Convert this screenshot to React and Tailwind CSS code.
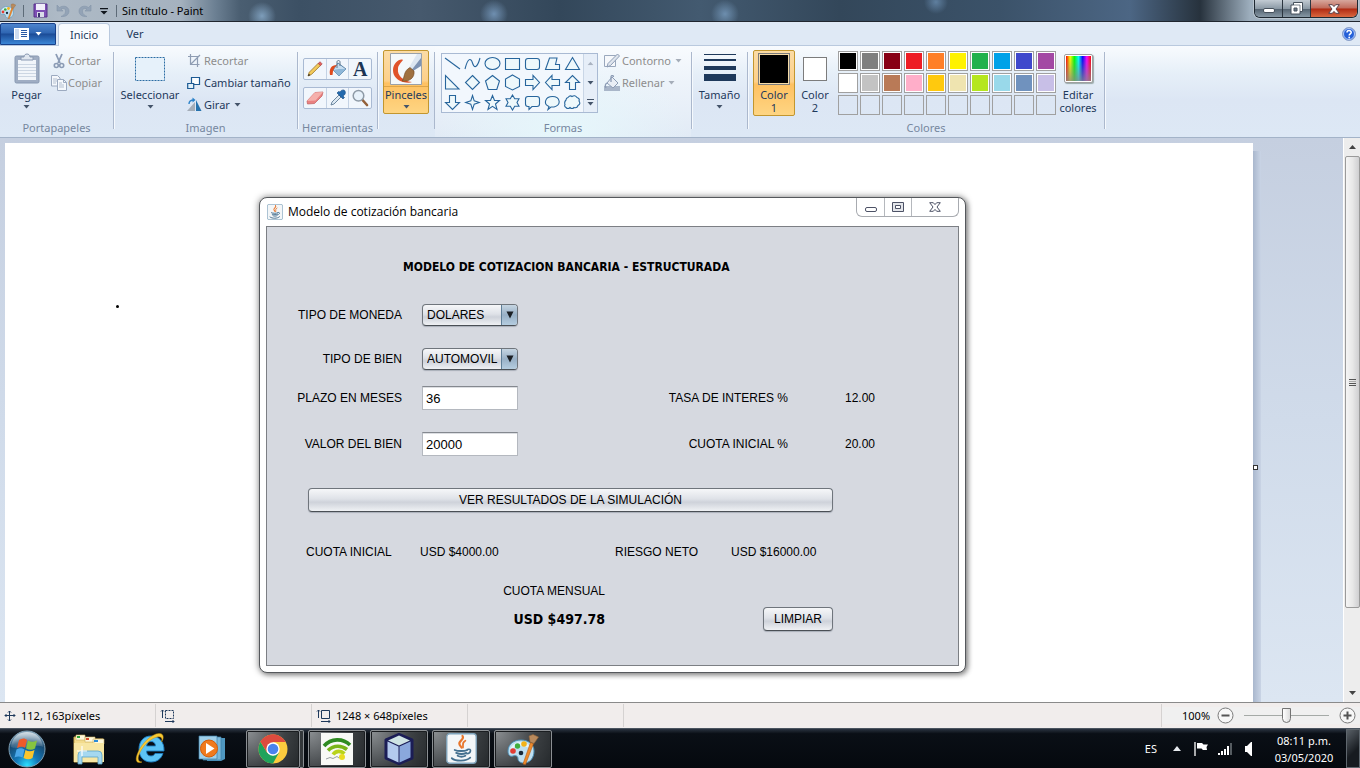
import React from "react";

const Caret = ({ className = "text-[#44546a]" }) => (
  <svg width="7" height="4" viewBox="0 0 7 4" className={className} aria-hidden="true">
    <path d="M0.5 0h6L3.5 3.6z" fill="currentColor" />
  </svg>
);

const PaletteIcon = ({ size }) => (
  <svg width={size} height={size} viewBox="0 0 32 32" aria-hidden="true">
    <path d="M14 7C6 7 1 12 1 18c0 4 2 6 5 5 3-1 5 0 5 3 0 2 2 4 6 4 6 0 10-5 10-12C27 11 21 7 14 7z" fill="#bfe0f2" stroke="#4d8fb5" strokeWidth="1" />
    <path d="M3 17c1-5 6-8 11-8s9 3 10 7c-6-4-15-4-21 1z" fill="#e6f5fc" />
    <circle cx="6" cy="18" r="2.800" fill="#e23c33" />
    <circle cx="10.500" cy="13" r="2.700" fill="#3fae3f" />
    <circle cx="17" cy="11" r="2.800" fill="#f2b31b" />
    <circle cx="14" cy="20" r="2.300" fill="#17293a" />
    <path d="M23.500 9.500l3 1L18.500 31.500l-2.500-.5z" fill="#ee8a2c" stroke="#b55d12" strokeWidth=".6" />
    <path d="M23 9l-1-6 4-1.500L31.500 4 27 10.500z" fill="#b98a5c" stroke="#8b6237" strokeWidth=".6" />
  </svg>
);

const JavaIcon = ({ size }) => (
  <svg width={size} height={size} viewBox="0 0 32 32" aria-hidden="true">
    <rect x=".8" y=".8" width="30.400" height="30.400" rx="3" fill="#f3f6f8" stroke="#7fa3bb" strokeWidth="1.400" />
    <g fill="none" strokeLinecap="round">
      <path d="M17 3c3 4-5 5-3 9l2 3" stroke="#e8762c" strokeWidth="2.200" />
      <path d="M20 8c-4 2-2 4-2.500 7" stroke="#e8762c" strokeWidth="1.800" />
      <path d="M9 17.500c3 1.500 10 1.500 13 0M10.500 20.500c3 1.200 8 1.200 10.500 0M12 23.500c2 1 6 1 8 0M6 26c4 3.500 15 3.500 19-.5" stroke="#44708f" strokeWidth="1.900" />
      <path d="M22 17c5-1.500 4 4-.5 4.500" stroke="#44708f" strokeWidth="1.600" />
    </g>
  </svg>
);

function TitleBar() {
  return (
    <header className="flex h-[22px] shrink-0 items-start border-b border-[#20262f] bg-[radial-gradient(circle_at_262px_16px,#7d9dba_0,transparent_14px),radial-gradient(circle_at_494px_14px,#6f8fb0_0,transparent_14px),radial-gradient(circle_at_725px_14px,#6d8eae_0,transparent_14px),radial-gradient(circle_at_936px_2px,#5f7f9f_0,transparent_12px),linear-gradient(90deg,#9fadbb_0,#aebac6_60px,#a5b2bf_180px,#6c8093_215px,#4a5e71_240px,#3c5064_300px,#46596d_420px,#33475a_560px,#435a70_700px,#33475a_840px,#3b5269_1000px,#4c6684_1130px,#27323d_1200px,#9daebd_1250px,#a9b9c8_100%)] font-['Noto_Sans',sans-serif] text-[11px] text-black">
      <div className="flex h-[21px] flex-1 items-center">
        <PaletteIcon size={16} />
        <span className="ml-[7px] h-3 w-px bg-[#5d6b78]" />
        <button aria-label="Guardar" className="ml-[9px]">
          <svg width="15" height="15" viewBox="0 0 15 15"><path d="M1 1h13v13H1z" fill="#7d4fb3" stroke="#56308a" /><path d="M3 1h9v6H3z" fill="#f1eefa" /><path d="M4 9h7v5H4z" fill="#d9dce9" /><path d="M5 10h2v4H5z" fill="#3b3370" /></svg>
        </button>
        <button aria-label="Deshacer" className="ml-2">
          <svg width="14" height="14" viewBox="0 0 14 14"><path d="M1 1v6h6L5 5c3-1.500 5 0 4.500 3-.3 2-2 3.500-4.500 4.500 5 .5 8-2 8-5.500C13 3 8 .5 3.500 3.500z" fill="#93a3b6" stroke="#8495a9" strokeWidth=".6" /></svg>
        </button>
        <button aria-label="Rehacer" className="ml-2">
          <svg width="14" height="14" viewBox="0 0 14 14"><path d="M13 1v6H7l2-2C6 3.500 4 5 4.500 8c.3 2 2 3.500 4.500 4.500C4 13 1 10.500 1 7c0-4 5-6.500 9.500-3.500z" fill="#93a3b6" stroke="#8495a9" strokeWidth=".6" /></svg>
        </button>
        <button aria-label="Personalizar barra de acceso rápido" className="ml-2">
          <svg width="8" height="8" viewBox="0 0 8 8"><path d="M0 1h8v1.300H0zM.5 4h7L4 7.500z" fill="#10161d" /></svg>
        </button>
        <span className="mr-[5px] ml-2 h-3 w-px bg-[#5d6b78]" />
        <h1 className="whitespace-nowrap">Sin título - Paint</h1>
      </div>
      <div className="mr-0.5 flex h-[18px] overflow-hidden rounded-b-md border border-t-0 border-[#1e2831] shadow-[0_0_0_1px_#b9c5cf]">
        <button aria-label="Minimizar" className="flex w-7 items-end justify-center border-r border-[#2b3640] bg-[linear-gradient(#c2cbd3,#8c9aa6_50%,#52616f_51%,#8798a5)] pb-1">
          <span className="h-[5px] w-3 rounded-xs border border-[#46515c] bg-white" />
        </button>
        <button aria-label="Restaurar" className="flex w-7 items-center justify-center border-r border-[#2b3640] bg-[linear-gradient(#c2cbd3,#8c9aa6_50%,#52616f_51%,#8798a5)]">
          <svg width="13" height="13" viewBox="0 0 13 13"><path d="M3.500 .5h9v9h-2.500v2.500h-9v-9h2.500z" fill="#fff" stroke="#46515c" /><path d="M4 6h3v3H4z" fill="#6c7a87" stroke="#46515c" /><path d="M3.500 3h6.500v6.500" fill="none" stroke="#46515c" strokeWidth=".7" /></svg>
        </button>
        <button aria-label="Cerrar" className="flex w-[46px] items-center justify-center bg-[linear-gradient(#d7a79d,#c06a5a_48%,#b02a12_52%,#d9673f)]">
          <svg width="12" height="10" viewBox="0 0 12 10"><path d="M.7.7h3.600L6 2.600 7.700.7h3.600L8 5l3.300 4.300H7.700L6 7.400 4.300 9.300H.7L4 5z" fill="#fff" stroke="#59404a" /></svg>
        </button>
      </div>
    </header>
  );
}

function TabRow() {
  return (
    <nav className="flex h-6 shrink-0 items-end border-b border-[#b9c9de] bg-[#dfe9f5] text-[#1e395b]">
      <button aria-label="Menú Paint" className="flex h-[22px] w-14 items-center justify-center gap-1.5 rounded-t-xs border border-[#17408a] bg-[linear-gradient(#4d84cc,#2f66b3_45%,#1b4b96_50%,#3b86d6)]">
        <svg width="15" height="12" viewBox="0 0 15 12"><path d="M0 0h15v12H0z" fill="#fff" /><path d="M1 1h4v10H1z" fill="#cddcf0" /><path d="M7 2.500h6M7 4.500h6M7 6.500h6M7 8.500h6" stroke="#2a5aa4" /></svg>
        <Caret className="text-white" />
      </button>
      <button className="-mb-px ml-0.5 h-[23px] w-[52px] rounded-t-sm border border-b-0 border-[#b9c9de] bg-[#f8fbfe]">Inicio</button>
      <button className="h-[22px] w-[50px]">Ver</button>
      <button aria-label="Ayuda" className="ml-auto mr-1 flex h-full items-center">
        <svg width="14" height="14" viewBox="0 0 14 14"><circle cx="7" cy="7" r="6.500" fill="#2560d8" stroke="#8fa3c8" /><circle cx="7" cy="7" r="5.500" fill="none" stroke="#dbe7fb" strokeWidth=".8" /><path d="M5 5.500C5 3 9.200 3 9.200 5.400 9.200 6.800 7.200 6.800 7.200 8.500" fill="none" stroke="#fff" strokeWidth="1.500" /><circle cx="7.200" cy="10.500" r=".9" fill="#fff" /></svg>
      </button>
    </nav>
  );
}

const Group = ({ label, width, className = "", children }) => (
  <section className={`flex shrink-0 ${width}`}>
    <div className={`flex min-w-0 flex-1 flex-col ${className}`}>
      <div className="flex h-[74px] items-start pt-1">{children}</div>
      <h2 className="text-center leading-4 text-[#76879f]">{label}</h2>
    </div>
    <span className="mt-1.5 h-[77px] w-px bg-[#abb8cd] shadow-[1px_0_0_#f5f9fd]" />
  </section>
);

const SmallButton = ({ icon, caret, muted, children }) => (
  <button disabled={muted} className={`flex h-[22px] items-center gap-px whitespace-nowrap ${muted ? "text-[#8d8d8d]" : ""}`}>
    {icon}
    <span>{children}</span>
    {caret && <Caret className={muted ? "ml-[3px] text-[#a5adb9]" : "ml-[3px] text-[#44546a]"} />}
  </button>
);

const cutIcon = <svg width="16" height="16" viewBox="0 0 16 16"><path d="M5 1l4 9M11 1L7 10" stroke="#8b9bb5" strokeWidth="1.800" /><circle cx="5.300" cy="12.500" r="2" fill="none" stroke="#8b9bb5" strokeWidth="1.600" /><circle cx="10.700" cy="12.500" r="2" fill="none" stroke="#8b9bb5" strokeWidth="1.600" /></svg>;
const copyIcon = <svg width="16" height="16" viewBox="0 0 16 16"><g fill="#f5f8fc" stroke="#9caac0"><path d="M.5 .5h6l2.500 2.500v8H.5z" /><path d="M6.500 4.500h6l3 3v8h-9z" /></g><path d="M2 4h4M2 6h4M2 8h3M8 8h3M8 10h5M8 12h5" stroke="#b3bfd0" /><path d="M12.500 4.500v3h3" fill="none" stroke="#9caac0" /></svg>;
const cropIcon = <svg width="16" height="16" viewBox="0 0 16 16"><path d="M3.500 1v10.500h9M1 3.500h9.500v10.500M3.500 11.500L13 2" fill="none" stroke="#8f9db3" strokeWidth="1.200" /></svg>;
const resizeIcon = <svg width="16" height="16" viewBox="0 0 16 16"><path d="M4.500 2.500h8v7h-8z" fill="#fafdff" stroke="#1c5a93" strokeWidth="1.200" /><path d="M.7 8.500h6v5h-6z" fill="#dff0fa" stroke="#1c5a93" strokeWidth="1.200" /></svg>;
const rotateIcon = <svg width="16" height="16" viewBox="0 0 16 16"><path d="M8 5v9H0z" fill="#a4adb8" /><path d="M9 3l5.500 11H9z" fill="#2672ad" /><path d="M2 7c0-3 2-4 5-4" fill="none" stroke="#2b82c9" strokeWidth="1.400" /><path d="M5.500 .5L8.500 3 5.500 5.500z" fill="#2b82c9" /></svg>;
const outlineIcon = <svg width="17" height="16" viewBox="0 0 17 16"><path d="M.5 2.500h11v11H.5z" fill="#f6f8fb" stroke="#9aa8bd" /><path d="M13.500 1l2 2-9 9.500-3.500 1.500 1-3.500z" fill="#dfe5ee" stroke="#8d9db5" /></svg>;
const fillIcon = <svg width="17" height="16" viewBox="0 0 17 16"><path d="M0 11h16v5H0z" fill="#a9b6c9" /><path d="M8 2l6 6-5 5-6-5z" fill="#e9eef5" stroke="#8c9cb5" /><path d="M7 7V2c0-2 2.500-2 2.500 0M3 8c-2 1-2 3-1 5" fill="none" stroke="#8c9cb5" strokeWidth="1.300" /></svg>;

const pencil = <svg width="18" height="18" viewBox="0 0 18 18"><path d="M2 16l1.300-3.800 9-9 2.200 2.200-9 9z" fill="#f3ca5b" stroke="#9a7426" strokeWidth=".8" /><path d="M12.200 3.500L14 1.700l2.200 2.200-1.800 1.800z" fill="#e2615f" stroke="#a23d3b" strokeWidth=".6" /><path d="M2 16l.8-2.300 1.500 1.500z" fill="#222" /></svg>;
const bucket = <svg width="18" height="18" viewBox="0 0 18 18"><path d="M9 3l8 6-7 7-6-6z" fill="#c4dcef" stroke="#5b84a8" /><path d="M4 10l6-1 7 0-7 7z" fill="#8fb7d8" /><path d="M8 8V2c0-2 3-2 3 0v4" fill="none" stroke="#60798f" /><path d="M1 15C0 9 2 5 8 5c-3 2-4 5-4.500 10z" fill="#df4b1e" /></svg>;
const letterA = <span className="font-['Liberation_Serif',serif] text-[20px] leading-5 font-bold text-[#1c3554]">A</span>;
const eraser = <svg width="18" height="18" viewBox="0 0 18 18"><path d="M1 12l8-8.500 8-.5-1 4-7.500 7.500-7 .5z" fill="#e98080" stroke="#c05d5d" strokeWidth=".7" /><path d="M1 12l8-8.500 8-.5-7.500 8.500z" fill="#f5b0ac" /></svg>;
const picker = <svg width="18" height="18" viewBox="0 0 18 18"><path d="M2 16l1-3 7-7 2 2-7 7z" fill="#dce8f2" stroke="#5f7b95" strokeWidth=".9" /><path d="M8 4l6 6 1.500-1.500-1.500-1.500c2-1 3-3 2-5s-4-1-5 1L9.500 2.500z" fill="#2369ad" stroke="#174a80" strokeWidth=".6" /></svg>;
const lens = <svg width="18" height="18" viewBox="0 0 18 18"><path d="M11.500 11l4.500 5" stroke="#94613a" strokeWidth="2.600" strokeLinecap="round" /><circle cx="7.500" cy="6.800" r="5.300" fill="#e7f1fa" stroke="#8e9aa6" strokeWidth="1.500" /></svg>;

const ToolRow = ({ tools }) => (
  <div className="flex h-[22px] w-[69px] rounded-xs border border-[#a9bad3] bg-[#f1f6fc]">
    {tools.map(([name, icon], i) => (
      <button key={name} aria-label={name} className={`flex flex-1 items-center justify-center ${i ? "border-l border-[#c4d2e4]" : ""}`}>{icon}</button>
    ))}
  </div>
);

const shapes = [
  ["Línea", "M1 3L16 14"],
  ["Curva", "M1 14C4 2 7 3 8.500 8S13 14 16 3"],
  ["Óvalo", "M1 8.500a7.500 6 0 1 0 15 0a7.500 6 0 1 0-15 0z"],
  ["Rectángulo", "M1.500 3.500h14v11h-14z"],
  ["Rectángulo redondeado", "M4 3.500h9q2.500 0 2.500 2.500v6q0 2.500-2.500 2.500h-9q-2.500 0-2.500-2.500v-6q0-2.500 2.500-2.500z"],
  ["Polígono", "M5.500 3h7.500L11.500 9.500h4v5H1.500z"],
  ["Triángulo", "M8.500 2.500L15.500 14.500h-14z"],
  ["Triángulo rectángulo", "M1.500 1.500v13.500h13.500z"],
  ["Rombo", "M8.500 1.500l7 7-7 7-7-7z"],
  ["Pentágono", "M8.500 1.500l7 5.500-2.700 8.500h-8.600L1.500 7z"],
  ["Hexágono", "M8.500 1l7 4v7.500l-7 3.500-7-3.500V5z"],
  ["Flecha derecha", "M1.500 5.500h7.500V1.500l6.500 7-6.500 7v-4H1.500z"],
  ["Flecha izquierda", "M15.500 5.500H8V1.500l-6.500 7 6.500 7v-4h7.500z"],
  ["Flecha arriba", "M5.500 15.500V8.500H1.500l7-7 7 7h-4v7z"],
  ["Flecha abajo", "M5.500 1.500V8.500H1.500l7 7 7-7h-4v-7z"],
  ["Estrella de 4 puntas", "M8.500 1.500l1.700 5.300 5.300 1.700-5.300 1.700-1.700 5.300-1.700-5.300-5.300-1.700 5.300-1.700z"],
  ["Estrella de 5 puntas", "M8.500 1.500l2 5h5l-4 3.500 1.500 5.500-4.500-3.200L4 15.500 5.500 10l-4-3.500h5z"],
  ["Estrella de 6 puntas", "M8.500 1l2.200 3.800h4.300l-2 3.700 2 3.700h-4.300L8.500 16l-2.200-3.800H2l2-3.700-2-3.700h4.300z"],
  ["Llamada rectangular", "M4 2.500h9q2.500 0 2.500 2.500v5q0 2.500-2.500 2.500H8l-3 3v-3H4Q1.500 12.500 1.500 10V5Q1.500 2.500 4 2.500z"],
  ["Llamada ovalada", "M5 12.500C-1 10 1 2.500 8.500 2.500S18 11 10 13l-3 0-3 2.500z"],
  ["Llamada de nube", "M4 3.500q2-2.500 4-1 3-2 5 1 3 1 2 3.500 2 3-1 4.500-1 3-4 2-2 2-4 0-2 2-4 0-2-1-1-3Q0 8 2 6q0-2 2-2.500z"],
];

function ShapeGallery() {
  return (
    <div className="flex h-[60px] w-[157px] border border-[#a9bad3] bg-[#f2f7fd]">
      <div className="grid flex-1 grid-cols-7">
        {shapes.map(([name, d]) => (
          <button key={name} aria-label={name} className="flex items-center justify-center">
            <svg width="17" height="17" viewBox="0 0 17 17"><path d={d} fill={name === "Línea" || name === "Curva" ? "none" : "#eef8fb"} stroke="#27659c" strokeWidth="1.100" /></svg>
          </button>
        ))}
      </div>
      <div className="flex w-3.5 flex-col border-l border-[#c9d6e6] bg-[#e6eef8]">
        <button aria-label="Formas anteriores" className="flex flex-1 rotate-180 items-center justify-center"><Caret className="text-[#a9b3c1]" /></button>
        <button aria-label="Formas siguientes" className="flex flex-1 items-center justify-center"><Caret /></button>
        <button aria-label="Más formas" className="flex flex-1 flex-col items-center justify-center gap-0.5"><span className="h-px w-[7px] bg-[#44546a]" /><Caret /></button>
      </div>
    </div>
  );
}

const palette = [
  ["Negro", "bg-black"], ["Gris 50%", "bg-[#7f7f7f]"], ["Rojo oscuro", "bg-[#880015]"], ["Rojo", "bg-[#ed1c24]"], ["Naranja", "bg-[#ff7f27]"],
  ["Amarillo", "bg-[#fff200]"], ["Verde", "bg-[#22b14c]"], ["Turquesa", "bg-[#00a2e8]"], ["Añil", "bg-[#3f48cc]"], ["Púrpura", "bg-[#a349a4]"],
  ["Blanco", "bg-white"], ["Gris 25%", "bg-[#c3c3c3]"], ["Marrón", "bg-[#b97a57]"], ["Rosa", "bg-[#ffaec9]"], ["Oro", "bg-[#ffc90e]"],
  ["Amarillo claro", "bg-[#efe4b0]"], ["Lima", "bg-[#b5e61d]"], ["Turquesa claro", "bg-[#99d9ea]"], ["Gris azulado", "bg-[#7092be]"], ["Lavanda", "bg-[#c8bfe7]"],
];

const active = "rounded-xs border border-[#c2962f] bg-[linear-gradient(#fbdca6,#fdd089_48%,#fec162_52%,#fed583)]";

function Ribbon() {
  return (
    <div className="flex h-[92px] shrink-0 border-b border-[#a3b3c8] bg-[linear-gradient(#f8fbfe,#e6eff8_30%,#dce6f4_60%,#dde8f5)] text-[#1e395b]">
      <Group label="Portapapeles" width="w-[114px]">
        <button className="ml-1 flex w-[45px] flex-col items-center pt-[3px]">
          <svg width="26" height="31" viewBox="0 0 26 31"><rect x="1" y="3" width="24" height="27" rx="1.500" fill="#9fadc3" stroke="#8999b2" /><path d="M4 7h18v20H4z" fill="#f1f5fa" /><path d="M4 11.500h18M4 14.500h18M4 17.500h18M4 20.500h18M4 23.500h18" stroke="#ccd6e3" /><path d="M7 7V4h3c0-4 6-4 6 0h3v3z" fill="#dfe6ef" stroke="#8999b2" /></svg>
          <span className="mt-[3px] mb-0.5 leading-4">Pegar</span>
          <Caret />
        </button>
        <div className="flex flex-col pl-0.5">
          <SmallButton icon={cutIcon} muted>Cortar</SmallButton>
          <SmallButton icon={copyIcon} muted>Copiar</SmallButton>
        </div>
      </Group>
      <Group label="Imagen" width="w-[184px]">
        <button className="ml-1 flex w-16 flex-col items-center pt-1.5">
          <svg width="32" height="26" viewBox="0 0 32 26"><path d="M1.500 1.500h29v23h-29z" fill="#e6f1fa" stroke="#2b6ca3" strokeDasharray="2 1" /></svg>
          <span className="mt-[5px] mb-0.5 leading-4">Seleccionar</span>
          <Caret />
        </button>
        <div className="flex flex-col pl-[5px]">
          <SmallButton icon={cropIcon} muted>Recortar</SmallButton>
          <SmallButton icon={resizeIcon}>Cambiar tamaño</SmallButton>
          <SmallButton icon={rotateIcon} caret>Girar</SmallButton>
        </div>
      </Group>
      <Group label="Herramientas" width="w-20">
        <div className="flex flex-col gap-[7px] pt-2 pl-[5px]">
          <ToolRow tools={[["Lápiz", pencil], ["Relleno", bucket], ["Texto", letterA]]} />
          <ToolRow tools={[["Borrador", eraser], ["Selector de color", picker], ["Lupa", lens]]} />
        </div>
      </Group>
      <Group label="" width="w-[57px]">
        <button className={`ml-[5px] flex h-16 w-[46px] flex-col items-center ${active}`}>
          <svg width="32" height="32" viewBox="0 0 32 32" className="mt-0.5"><path d="M.5 .5h31v31H.5z" fill="#f4f8fa" stroke="#9aa1a8" /><path d="M13 7C10 5 3 10 3 17c0 6 4 10 10 12 4 1 7 1 9 0-9-1-15-7-14-13 0-4 3-6 5-9z" fill="#e0532a" /><path d="M31 1v12l-8 5-3-3z" fill="#7d93b3" /><path d="M31 5L22 16.500l-3-2L27 1h4z" fill="#dce6f1" /><path d="M20 14.500l4 3.500c1 7-5 11-12 10 3-3 1-10 8-13.500z" fill="#a0713f" stroke="#70451d" strokeWidth=".6" /></svg>
          <span className="mt-px mb-0.5 w-full border-t border-[#dfa648] leading-4">Pinceles</span>
          <Caret />
        </button>
      </Group>
      <Group label="Formas" width="w-[257px]" className="bg-[radial-gradient(ellipse_at_bottom,#e6f7fb,transparent_70%),linear-gradient(#f8fbfe,#edf3fa_40%,#e2ebf6)]">
        <div className="pt-[3px] pl-1.5"><ShapeGallery /></div>
        <div className="flex flex-col pl-1.5">
          <SmallButton icon={outlineIcon} caret muted>Contorno</SmallButton>
          <SmallButton icon={fillIcon} caret muted>Rellenar</SmallButton>
        </div>
      </Group>
      <Group label="" width="w-14">
        <button className="flex w-full flex-col items-center pt-1">
          <svg width="32" height="29" viewBox="0 0 32 29"><path d="M0 0h32v1H0zM0 5h32v2H0zM0 12h32v4H0zM0 20h32v7H0z" fill="#1e395b" /></svg>
          <span className="mt-1 mb-0.5 leading-4">Tamaño</span>
          <Caret />
        </button>
      </Group>
      <Group label="Colores" width="w-[357px]">
        <button className={`ml-[5px] flex h-[66px] w-[42px] flex-col items-center pt-0.5 ${active}`}>
          <span className="size-8 border border-[#7c7c7c] bg-black shadow-[inset_0_0_0_1px_#f6dca8]" />
          <span className="mt-[3px] leading-[13px]">Color<br />1</span>
        </button>
        <button className="flex w-10 flex-col items-center pt-[7px]">
          <span className="size-6 border border-[#7c7c7c] bg-white" />
          <span className="mt-[7px] leading-[13px]">Color<br />2</span>
        </button>
        <div className="ml-[3px] grid grid-cols-10 gap-0.5 pt-px">
          {palette.map(([name, color]) => (
            <button key={name} aria-label={name} className={`size-5 border border-[#a0a0a0] ${color} shadow-[inset_0_0_0_1px_#fff]`} />
          ))}
          {Array.from({ length: 10 }, (_, i) => (
            <button key={i} aria-label="Color personalizado" className="size-5 border border-[#a0a0a0]" />
          ))}
        </div>
        <button className="flex w-11 flex-col items-center pt-1">
          <span className="size-[29px] rounded-xs border border-[#a0a0a0] bg-white p-px shadow-[1px_1px_1px_#9aa]">
            <span className="block size-full bg-[linear-gradient(transparent,#888888cc),linear-gradient(90deg,red,#ff0,#0f0,#0ff,#00f,#f0f,red)]" />
          </span>
          <span className="mt-[5px] leading-[13px]">Editar<br />colores</span>
        </button>
      </Group>
    </div>
  );
}

const steel = "border border-[#6f757c] border-b-[#4a4f55] bg-[linear-gradient(#f6f7f9,#dfe2e8_45%,#ced2da_60%,#eff1f4)] shadow-[0_1px_1px_#a9aeb8]";

const Select = ({ id, value }) => (
  <div className={`relative h-[22px] overflow-hidden rounded-sm ${steel}`}>
    <select id={id} defaultValue={value} className="h-full w-full appearance-none bg-transparent pl-1 outline-none">
      <option>{value}</option>
    </select>
    <span className="pointer-events-none absolute inset-y-0 right-0 flex w-4 items-center justify-center border-l border-[#5f7f98] bg-[linear-gradient(#c5d5e2,#98b0c6_50%,#b5cde0)]">
      <svg width="8" height="8" viewBox="0 0 8 8"><path d="M.5 .5h7L4 7.500z" fill="#1b1f24" /></svg>
    </span>
  </div>
);

const field = "h-6 w-full border border-[#b4b8bf] border-t-[#84888f] bg-white px-[3px] text-[13px] outline-none shadow-[inset_0_1px_0_#dcdee2]";

function Dialog() {
  return (
    <section className="w-[707px] rounded-lg border border-[#55585c] bg-white px-1.5 pb-1.5 text-black shadow-[0_0_6px_1px_rgba(0,0,0,0.35),2px_2px_5px_rgba(0,0,0,0.3)]">
      <header className="flex h-7 items-start">
        <div className="flex h-full flex-1 items-center gap-[5px] font-['Open_Sans',sans-serif] text-[12px]">
          <span className="pl-px"><JavaIcon size={16} /></span>
          <h2>Modelo de cotización bancaria</h2>
        </div>
        <div className="flex h-[19px] rounded-b-md border border-t-0 border-[#a8abb0]">
          <button aria-label="Minimizar diálogo" className="flex w-7 items-center justify-center border-r border-[#b5b8bd] pt-1"><span className="h-[5px] w-3 rounded-xs border border-[#4d5266]" /></button>
          <button aria-label="Maximizar diálogo" className="flex w-[27px] items-center justify-center border-r border-[#b5b8bd]"><svg width="12" height="10" viewBox="0 0 12 10"><path d="M.5 .5h11v9H.5z" fill="#e4e6ea" stroke="#4d5266" /><path d="M3.500 3.500h5v3h-5z" fill="#fff" stroke="#4d5266" /></svg></button>
          <button aria-label="Cerrar diálogo" className="flex w-[46px] items-center justify-center"><svg width="12" height="10" viewBox="0 0 12 10"><path d="M.7.7h3.600L6 2.600 7.700.7h3.600L8 5l3.300 4.300H7.700L6 7.400 4.300 9.300H.7L4 5z" fill="#fff" stroke="#4d5266" /></svg></button>
        </div>
      </header>
      <form onSubmit={(e) => e.preventDefault()} className="border border-[#7c7f84] bg-[#d6d9e0] pb-[34px] font-['Liberation_Sans',sans-serif] text-[12px] leading-4">
        <h3 className="pt-8 pb-[18px] pl-[136px] font-['DejaVu_Sans_Condensed','DejaVu_Sans',sans-serif] text-[12px] font-bold">MODELO DE COTIZACION BANCARIA - ESTRUCTURADA</h3>
        <div className="grid grid-cols-[135px_96px_250px_67px] grid-rows-[44px_44px_34px_58px] items-center gap-x-5 text-right">
          <label htmlFor="moneda">TIPO DE MONEDA</label>
          <Select id="moneda" value="DOLARES" />
          <span className="col-span-2" />
          <label htmlFor="bien">TIPO DE BIEN</label>
          <Select id="bien" value="AUTOMOVIL" />
          <span className="col-span-2" />
          <label htmlFor="plazo">PLAZO EN MESES</label>
          <input id="plazo" defaultValue="36" className={field} />
          <span>TASA DE INTERES %</span>
          <output>12.00</output>
          <label htmlFor="valor">VALOR DEL BIEN</label>
          <input id="valor" defaultValue="20000" className={field} />
          <span>CUOTA INICIAL %</span>
          <output>20.00</output>
        </div>
        <div className="mt-[15px] ml-[41px] w-[525px]">
          <button className={`h-6 w-full rounded-sm ${steel}`}>VER RESULTADOS DE LA SIMULACIÓN</button>
          <div className="mt-8 grid grid-cols-[112px_195px_116px_1fr]">
            <span className="-ml-0.5">CUOTA INICIAL</span>
            <output>USD $4000.00</output>
            <span>RIESGO NETO</span>
            <output>USD $16000.00</output>
          </div>
          <div className="mt-[23px] flex items-end justify-between">
            <div className="w-[297px] text-right">
              <p>CUOTA MENSUAL</p>
              <output className="mt-2.5 mb-0.5 block font-['DejaVu_Sans_Condensed','DejaVu_Sans',sans-serif] text-[14px] leading-5 font-bold">USD $497.78</output>
            </div>
            <button className={`h-6 w-[70px] rounded-sm ${steel}`}>LIMPIAR</button>
          </div>
        </div>
      </form>
    </section>
  );
}

function Workspace() {
  return (
    <main className="flex min-h-0 flex-1 bg-[linear-gradient(#c5cfe0,#d0dbea_50%,#dce6f2)]">
      <div className="flex min-w-0 flex-1 overflow-hidden pt-[5px] pl-[5px]">
        <div className="relative min-w-0 flex-1 bg-white">
          <div className="pt-[54px] pl-[254px]"><Dialog /></div>
          <span className="absolute top-[162px] left-[111px] size-[3px] rounded-full bg-black" />
          <span className="absolute top-[322px] -right-[5px] z-10 size-[5px] border border-[#333] bg-white" />
        </div>
        <span className="mt-2 w-2 shrink-0 bg-[linear-gradient(90deg,#a9b7cd,#c9d4e5)]" />
        <span className="w-[82px] shrink-0" />
      </div>
      <div className="flex w-[17px] shrink-0 flex-col items-center border-l border-white bg-[#ededed]">
        <button aria-label="Subir" className="flex h-[18px] items-center"><svg width="7" height="4" viewBox="0 0 7 4"><path d="M0 4h7L3.500 0z" fill="#444" /></svg></button>
        <div className="flex h-[452px] w-[15px] flex-col items-center justify-center gap-px rounded-xs border border-[#9a9a9a] bg-[linear-gradient(90deg,#f5f5f5,#e8e8e8_50%,#cfcfd1)]">
          <span className="h-px w-[7px] bg-[#555]" /><span className="h-px w-[7px] bg-[#aaa]" /><span className="h-px w-[7px] bg-[#555]" /><span className="h-px w-[7px] bg-[#555]" />
        </div>
        <button aria-label="Bajar" className="mt-auto flex h-[18px] items-center"><svg width="7" height="4" viewBox="0 0 7 4"><path d="M0 0h7L3.500 4z" fill="#444" /></svg></button>
      </div>
    </main>
  );
}

const cell = "flex h-[23px] w-[156px] items-center border-r border-[#d5d2d1] pl-1 gap-1";

function StatusBar() {
  return (
    <footer className="flex h-[26px] shrink-0 items-center border-t border-[#8a8a8a] bg-[#f1edec] whitespace-nowrap text-black">
      <div className={cell}>
        <svg width="12" height="12" viewBox="0 0 12 12"><path d="M5.500 1v10M1 5.500h10" stroke="#1e395b" /><path d="M4 2.500L5.500 1 7 2.500M4 9.500L5.500 11 7 9.500M2.500 4L1 5.500 2.500 7M9.500 4L11 5.500 9.500 7" fill="none" stroke="#1e395b" /></svg>
        <span className="pl-px">112, 163píxeles</span>
      </div>
      <div className={cell}>
        <svg width="16" height="14" viewBox="0 0 16 14"><path d="M5.500 1.500h8v8h-8z" fill="none" stroke="#1e395b" strokeDasharray="2 1" /><path d="M2.500 1v8M1 2.500L2.500 1 4 2.500M5 12.500h9M12.500 11l1.500 1.500-1.500 1.500" fill="none" stroke="#1e395b" /></svg>
      </div>
      <div className={cell}>
        <svg width="16" height="14" viewBox="0 0 16 14"><path d="M5.500 1.500h8v8h-8z" fill="none" stroke="#1e395b" /><path d="M2.500 1v8M1 2.500L2.500 1 4 2.500M5 12.500h9M12.500 11l1.500 1.500-1.500 1.500" fill="none" stroke="#1e395b" /></svg>
        <span>1248 × 648píxeles</span>
      </div>
      <div className={cell} />
      <div className="h-[23px] flex-1 border-r border-[#d5d2d1]" />
      <div className="flex w-[198px] items-center bg-[#f0f0f0] pr-1 pl-5">
        <span className="w-[35px]">100%</span>
        <button aria-label="Alejar"><svg width="17" height="17" viewBox="0 0 17 17"><circle cx="8.500" cy="8.500" r="7.500" fill="#f7f7f7" stroke="#7b7b7b" /><path d="M4.500 7.500h8v2h-8z" fill="#555" /></svg></button>
        <input aria-label="Zoom" type="range" defaultValue="50" className="mx-2.5 h-4 min-w-0 flex-1 appearance-none bg-[linear-gradient(#a5aaa7,#a5aaa7)] bg-[length:100%_1px] bg-center bg-no-repeat [&::-webkit-slider-thumb]:h-[15px] [&::-webkit-slider-thumb]:w-[9px] [&::-webkit-slider-thumb]:appearance-none [&::-webkit-slider-thumb]:rounded-b-full [&::-webkit-slider-thumb]:rounded-t-xs [&::-webkit-slider-thumb]:border [&::-webkit-slider-thumb]:border-[#737373] [&::-webkit-slider-thumb]:bg-[linear-gradient(90deg,#fff,#dcdcdc)]" />
        <button aria-label="Acercar"><svg width="17" height="17" viewBox="0 0 17 17"><circle cx="8.500" cy="8.500" r="7.500" fill="#f7f7f7" stroke="#7b7b7b" /><path d="M4.500 7.500h3v-3h2v3h3v2h-3v3h-2v-3h-3z" fill="#555" /></svg></button>
      </div>
    </footer>
  );
}

const appButton = "flex h-[38px] items-center justify-center rounded-xs border border-[#8b8f93] bg-[radial-gradient(circle_at_0_0,#8d9194,#3d4144_60%,#24282b)] shadow-[inset_0_0_0_1px_#1a1d20]";

function TaskBar() {
  return (
    <nav aria-label="Barra de tareas" className="flex h-10 shrink-0 items-center border-t border-[#4a545f] bg-[linear-gradient(#2a3340,#0a0f16_12%,#05090e)] font-['Noto_Sans',sans-serif] text-[11px] text-white">
      <button aria-label="Inicio" className="ml-2">
        <svg width="38" height="38" viewBox="0 0 38 38">
          <defs>
            <radialGradient id="orb" cx=".5" cy=".95" r=".9"><stop offset="0" stopColor="#2be0ff" /><stop offset=".35" stopColor="#1478b8" /><stop offset=".75" stopColor="#174a72" /><stop offset="1" stopColor="#7c9db4" /></radialGradient>
            <linearGradient id="gloss" x2="0" y2="1"><stop stopColor="#fff" stopOpacity=".65" /><stop offset="1" stopColor="#fff" stopOpacity=".1" /></linearGradient>
          </defs>
          <circle cx="19" cy="19" r="18" fill="url(#orb)" stroke="#7fa0b5" />
          <path d="M3 17C4 7 11 2 19 2s15 5 16 15C26 13 12 21 3 17z" fill="url(#gloss)" />
          <path d="M11 10c3-2 6-2 8 0l-2 8c-3-2-5-1-8 0z" fill="#ee5a2a" />
          <path d="M20 10.500c3 2 6 1.500 9 0l-2 8c-3 2-6 1.500-9 0z" fill="#86c440" />
          <path d="M8.500 19.500c3-2 6-1.500 8 0l-2 8c-3-1.500-5-1.500-8 0z" fill="#4aa6e8" />
          <path d="M17.500 20c3 2 6 1.500 9 0l-2 8c-3 2-6 1.500-9 0z" fill="#fbc52c" />
        </svg>
      </button>
      <button aria-label="Explorador" className="ml-[26px]">
        <svg width="34" height="32" viewBox="0 0 34 32"><path d="M2 4h10l1 2h18v23H2z" fill="#f3dc8d" stroke="#c7a54c" /><path d="M4 2h9v5H4zM13 4h10v5H13zM21 6h11v5H21z" fill="#fff8dc" stroke="#cdb267" strokeWidth=".6" /><path d="M5 3h3v2H5z" fill="#2fa33a" /><path d="M14 5h3v2h-3z" fill="#d84a2c" /><path d="M22 7h4v2h-4z" fill="#2a8bd8" /><path d="M2 10h30v19H2z" fill="#f7e6a3" /><path d="M6 31V22q0-4 4-4h16q4 0 4 4v9h-4v-7H10v7z" fill="#a5d8f0" stroke="#5ba4c9" strokeWidth=".8" /><path d="M10 13v10M5 18h10" stroke="#fff" strokeWidth="1.200" /></svg>
      </button>
      <button aria-label="Internet Explorer" className="ml-7">
        <svg width="32" height="32" viewBox="0 0 32 32"><path d="M17 3C9 3 5 9 5 16s4 13 12 13c6 0 10-3 12-8.500h-8c-1 1.700-2 2.500-4 2.500-3 0-4.500-2-4.500-5H30C30.500 9 25 3 17 3zm-4.500 10c.5-3 2-4.500 4.500-4.500s4.500 1.500 4.500 4.500z" fill="#5cc3f5" stroke="#1c7dc2" strokeWidth=".9" /><path d="M8 29C3 31 1 28 3 22 6 13 14 4 22 1c5-1.500 8 0 7 5l-1.500 3C29 5 27 3 23 4 15 6 7 15 4.500 23 3.500 27 5 29 8 29z" fill="#f8c933" stroke="#c99412" strokeWidth=".5" /></svg>
      </button>
      <button aria-label="Reproductor" className="ml-8">
        <svg width="28" height="28" viewBox="0 0 28 28"><path d="M9 3h18v21l-4 2H9z" fill="#4f97c0" /><path d="M5 2h18v23H5z" fill="#7cb9da" stroke="#3c7fa8" strokeWidth=".7" /><path d="M1 1h18v23H1z" fill="#9fd0ea" stroke="#3c7fa8" strokeWidth=".7" /><circle cx="11" cy="13.500" r="8.500" fill="#f07a1d" stroke="#d35c08" /><path d="M8 8v11l8.500-5.500z" fill="#fff" /></svg>
      </button>
      <div className="ml-5 flex items-center gap-1">
        <div className="flex items-center">
          <button aria-label="Chrome" className={`w-[54px] ${appButton}`}>
            <svg width="30" height="30" viewBox="0 0 30 30"><circle cx="15" cy="15" r="14.500" fill="#fccb3e" /><path d="M15 15L2.500 7.700A14.500 14.500 0 0 1 27.600 8H15z" fill="#dd4b3e" /><path d="M2.500 7.700A14.500 14.500 0 0 0 15 29.500L21 18.500 15 21.500 9 18.500z" fill="#1fa35c" /><path d="M2.500 7.700L9 18.500 15 8h12.600A14.500 14.500 0 0 0 2.500 7.700z" fill="#dd4b3e" /><circle cx="15" cy="15" r="6.700" fill="#fff" /><circle cx="15" cy="15" r="5.300" fill="#4a83ee" /></svg>
          </button>
          <span className="h-[38px] w-1 rounded-r-xs border border-l-0 border-[#8b8f93] bg-[#33373a]" />
        </div>
        <button aria-label="Wi-Fi" className={`w-[58px] ${appButton}`}>
          <svg width="32" height="32" viewBox="0 0 32 32"><path d="M0 0h32v32H0z" fill="#f8f9f6" /><g fill="none" strokeWidth="3.600"><path d="M3 13C10 5 22 5 29 12" stroke="#2f8b22" /><path d="M7 17.500c6-6 14-5 19-1" stroke="#79b519" /><path d="M12 21.500c3-4 8-4 11.500-.8" stroke="#b8d31b" /></g><circle cx="21" cy="24" r="3" fill="#e9dc22" /><path d="M5 26l4-1.500 3 1 4-2 2 1.500" stroke="#9aa0a4" fill="none" /></svg>
        </button>
        <button aria-label="NetBeans" className={`w-[58px] ${appButton}`}>
          <svg width="32" height="34" viewBox="0 0 32 34"><path d="M16 2.500L29 8v18L16 31.500 3 26V8z" fill="#1b1d56" stroke="#1b1d56" strokeWidth="3" strokeLinejoin="round" /><path d="M16 3.500l11 5-11 5-11-5z" fill="#cfe4e4" /><path d="M4.500 9.500l11 5v16l-11-5z" fill="#b4caee" /><path d="M27.500 9.500l-11 5v16l11-5z" fill="#8aa8dc" /></svg>
        </button>
        <button aria-label="Java" className={`w-[58px] ${appButton}`}><JavaIcon size={31} /></button>
        <button aria-label="Paint" className={`w-[58px] ${appButton}`}><PaletteIcon size={32} /></button>
      </div>
      <div className="ml-auto flex items-center">
        <span>ES</span>
        <button aria-label="Mostrar iconos ocultos" className="ml-4"><svg width="8" height="5" viewBox="0 0 8 5"><path d="M0 5h8L4 0z" fill="#e6eaee" /></svg></button>
        <svg className="ml-[13px]" width="15" height="14" viewBox="0 0 15 14"><path d="M1 0v14" stroke="#fff" strokeWidth="1.300" /><path d="M3 1h5l1.500 1.500H14L12.500 5 13 8H9L7.500 6.500H3z" fill="#fff" /></svg>
        <svg className="ml-[9px]" width="15" height="13" viewBox="0 0 15 13"><path d="M0 11h2v2H0zM3 9h2v4H3zM6 7h2v6H6zM9 4h2v9H9z" fill="#fff" /><path d="M12 1h2v12h-2z" fill="#555b60" /></svg>
        <svg className="ml-3" width="8" height="14" viewBox="0 0 8 14"><path d="M0 4h2l4-4h1v14H6L2 10H0z" fill="#fff" /></svg>
        <time className="ml-[21px] w-[60px] text-center leading-[17px] whitespace-nowrap">08:11 p.m.<br />03/05/2020</time>
        <button aria-label="Mostrar escritorio" className="ml-3 h-[39px] w-3.5 border border-[#5f676e] bg-[linear-gradient(135deg,#596067,#171b20_60%)]" />
      </div>
    </nav>
  );
}

export default function App() {
  return (
    <div className="flex h-screen flex-col overflow-hidden font-['Noto_Sans',sans-serif] text-[11px] leading-4">
      <TitleBar />
      <TabRow />
      <Ribbon />
      <Workspace />
      <StatusBar />
      <TaskBar />
    </div>
  );
}
